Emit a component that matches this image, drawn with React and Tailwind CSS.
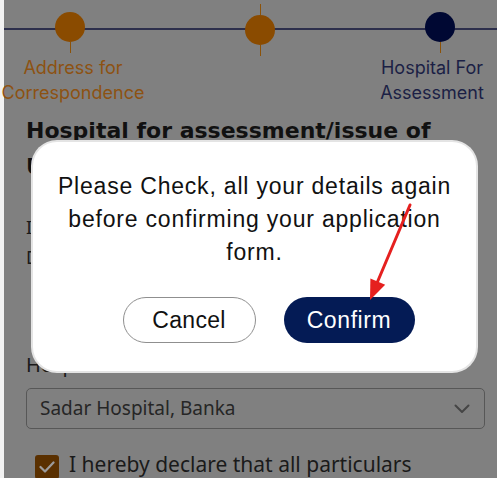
import React from "react";

const Step = ({ label, dot, text, stemTop, className = "", labelClass = "" }) => (
  <div className={`flex w-[132px] shrink-0 flex-col items-center ${className}`}>
    <div className={`h-[11px] w-px ${stemTop ? "bg-[#8c5208]" : "bg-transparent"}`} />
    <div className={`h-[30px] w-[30px] rounded-full ${dot}`} />
    <div className="h-[11px] w-px bg-[#8c5208]" />
    <div className={`mt-[2px] whitespace-nowrap text-center text-[18px] leading-[25px] ${text} ${labelClass}`}>
      {label.map((l) => (
        <div key={l}>{l}</div>
      ))}
    </div>
  </div>
);

export default function App() {
  return (
    <div className="relative flex h-[478px] w-[497px] overflow-hidden bg-[#808080]" style={{ fontFamily: "'Noto Sans', sans-serif" }}>
      <div className="w-[4px] shrink-0 bg-[#f2f2f2]" />
      <div className="relative flex-1">
        {/* stepper */}
        <div className="relative pt-px" style={{ fontFamily: "Inter, sans-serif" }}>
          <div className="absolute left-0 right-0 top-[28px] h-[2px] bg-[#2d2f4c]" />
          <div className="relative flex items-start">
            <Step label={["Address for", "Correspondence"]} dot="bg-[#8a4b00]" text="text-[#8d5212]" labelClass="pl-[6px]" />
            <Step label={[]} dot="bg-[#8a4b00]" text="" stemTop className="ml-[58px] mt-[3px]" />
            <Step
              label={["Hospital For", "Assessment"]}
              dot="bg-[#000833]"
              text="text-[#1b1f45]"
              className="ml-[48px]"
              labelClass="pr-4"
            />
          </div>
        </div>

        {/* page body under the dim */}
        <div className="px-[22px] pt-[8px] text-[#111]">
          <h2 className="whitespace-nowrap text-[22px] font-bold leading-[36px]" style={{ fontFamily: "'DejaVu Sans', sans-serif" }}>
            Hospital for assessment/issue of
            <br />
            UDID Card
          </h2>
          <p className="mt-[27px] text-[18px] leading-[30px] text-[#1a1a1a]">
            I confirm the hospital
            <br />
            Details
          </p>
          <div className="mt-[80px] text-[20px] leading-[26px] text-[#1a1a1a]">Hospital Name</div>
          <div className="mt-[10px] flex h-[41px] w-[459px] items-center justify-between rounded-[5px] border border-[#575757] pl-[13px] pr-[14px]">
            <span className="text-[19px] text-[#262626]">Sadar Hospital, Banka</span>
            <svg width="16" height="10" viewBox="0 0 16 10" fill="none" stroke="#454545" strokeWidth="2" strokeLinecap="round" strokeLinejoin="round">
              <path d="M1.5 1.5 8 8l6.5-6.5" />
            </svg>
          </div>
          <div className="mt-[22px] flex items-start gap-[10px] pl-[9px]">
            <div className="mt-[4px] flex h-[24px] w-[24px] shrink-0 items-center justify-center rounded-[3px] bg-[#5a3000]">
              <svg width="16" height="12" viewBox="0 0 16 12" fill="none" stroke="#9c9c9c" strokeWidth="2.2" strokeLinecap="round" strokeLinejoin="round">
                <path d="M1.5 6 6 10.5 14.5 1.5" />
              </svg>
            </div>
            <span className="whitespace-nowrap text-[21px] leading-[26px] text-[#1a1a1a]">I hereby declare that all particulars</span>
          </div>
        </div>
      </div>

      {/* modal */}
      <div className="absolute left-[33px] top-[142px] flex h-[229px] w-[443px] flex-col items-center rounded-[24px] bg-white pt-[28px] shadow-[0_0_0_2px_#e4e4e4]" style={{ fontFamily: "'Liberation Sans', Arial, sans-serif" }}>
        <p className="whitespace-nowrap text-center text-[23px] leading-[33px] tracking-[0.8px] text-[#111]">
          Please Check, all your details again
          <br />
          before confirming your application
          <br />
          form.
        </p>
        <div className="mt-[28px] flex gap-[28px] pl-[28px]">
          <button className="h-[46px] w-[133px] rounded-full border border-[#8f8f8f] bg-white text-[23px] tracking-[0.3px] text-[#111]">Cancel</button>
          <button className="h-[46px] w-[131px] rounded-full bg-[#041b55] text-[23px] tracking-[0.6px] text-white">Confirm</button>
        </div>
      </div>

      {/* red annotation arrow */}
      <svg className="pointer-events-none absolute left-0 top-0" width="497" height="478" viewBox="0 0 497 478">
        <line x1="410" y1="205" x2="377" y2="283" stroke="#e5201f" strokeWidth="3" strokeLinecap="round" />
        <polygon points="370,300 370.4,278.5 385.2,284.7" fill="#e5201f" />
      </svg>
    </div>
  );
}
